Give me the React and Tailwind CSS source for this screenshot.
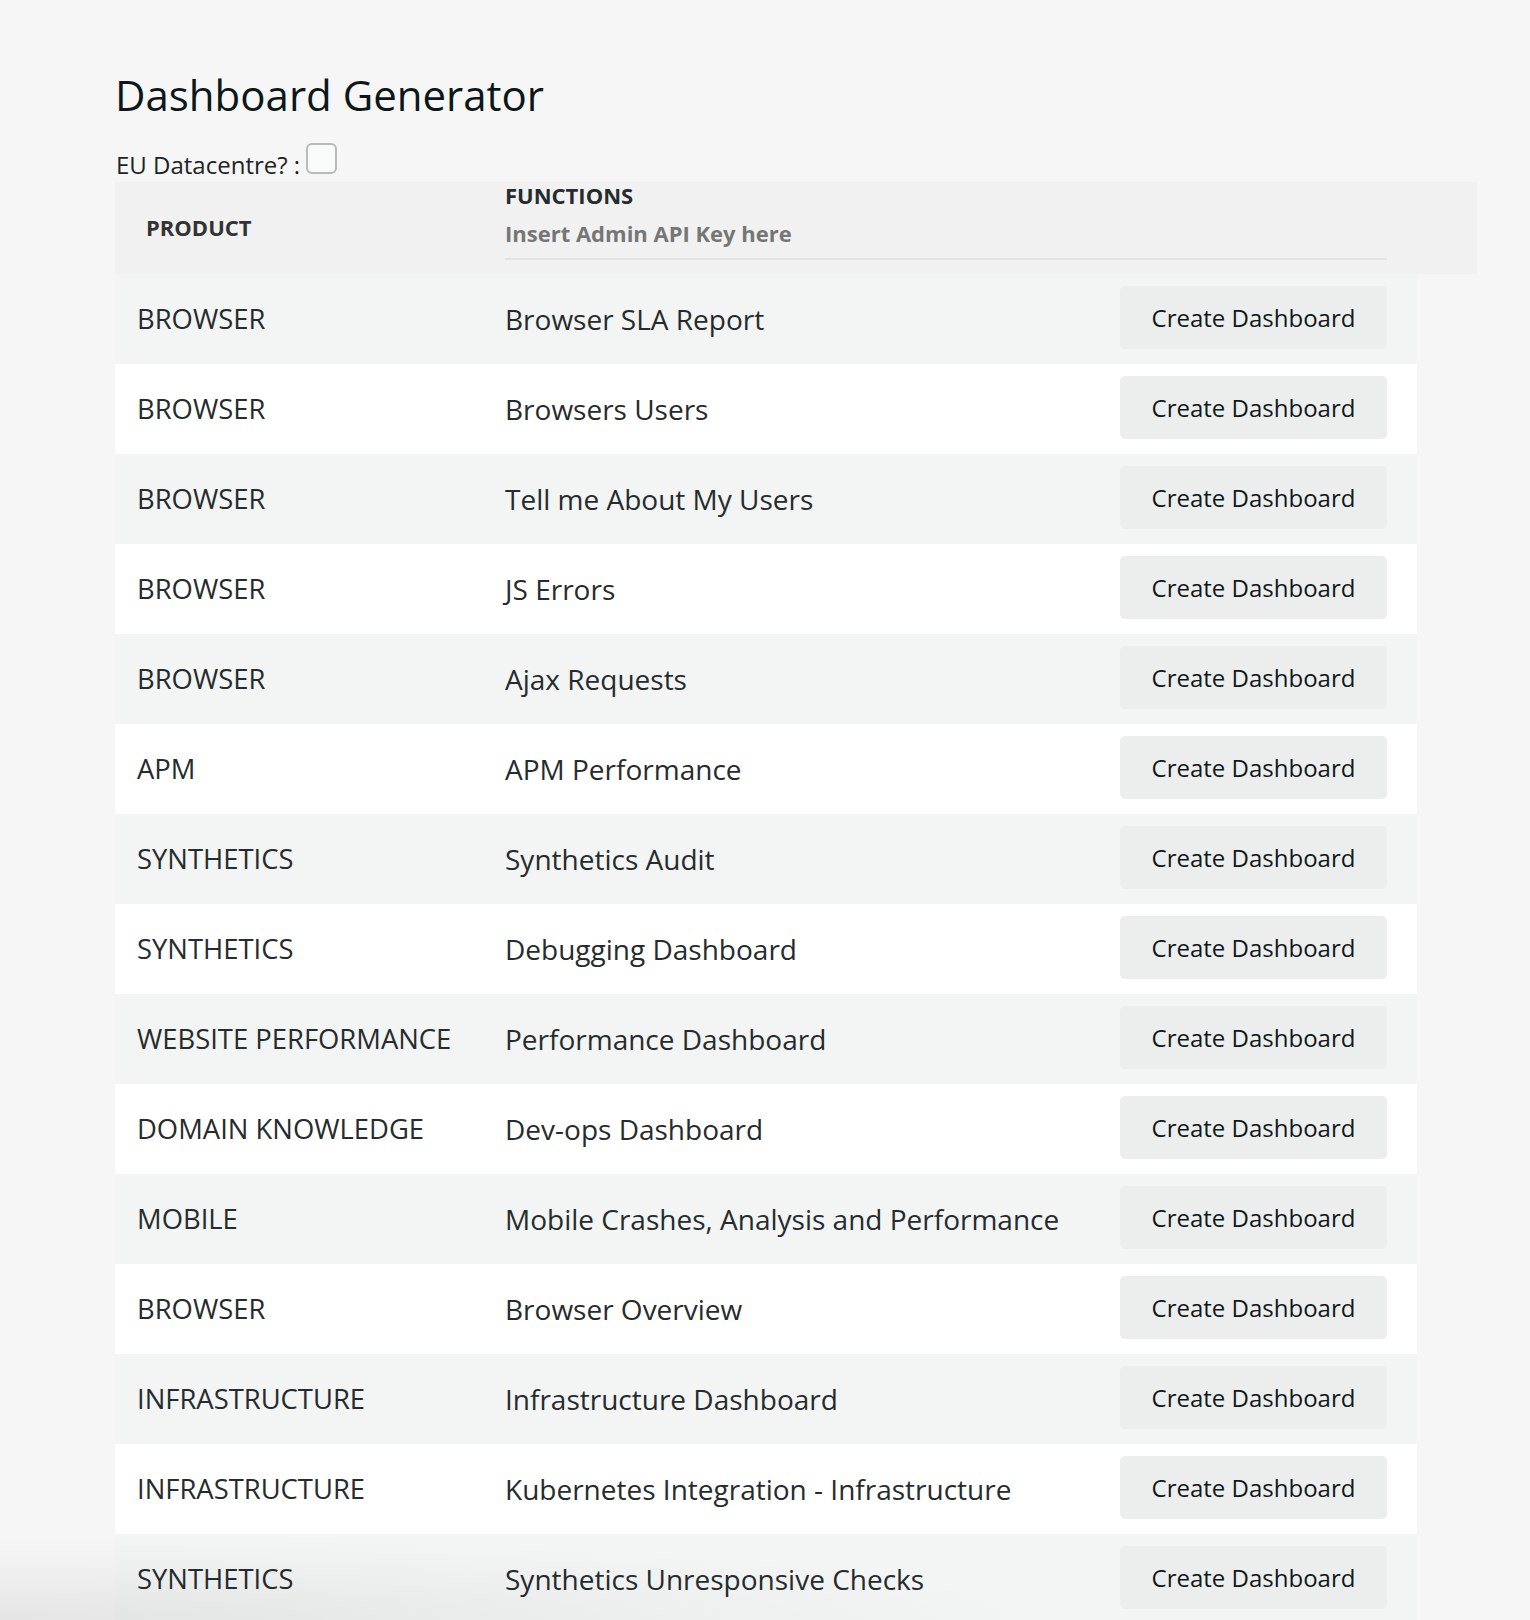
import React from "react";

const rows = [
  ["BROWSER", "Browser SLA Report"],
  ["BROWSER", "Browsers Users"],
  ["BROWSER", "Tell me About My Users"],
  ["BROWSER", "JS Errors"],
  ["BROWSER", "Ajax Requests"],
  ["APM", "APM Performance"],
  ["SYNTHETICS", "Synthetics Audit"],
  ["SYNTHETICS", "Debugging Dashboard"],
  ["WEBSITE PERFORMANCE", "Performance Dashboard"],
  ["DOMAIN KNOWLEDGE", "Dev-ops Dashboard"],
  ["MOBILE", "Mobile Crashes, Analysis and Performance"],
  ["BROWSER", "Browser Overview"],
  ["INFRASTRUCTURE", "Infrastructure Dashboard"],
  ["INFRASTRUCTURE", "Kubernetes Integration - Infrastructure"],
  ["SYNTHETICS", "Synthetics Unresponsive Checks"],
];

export default function App() {
  return (
    <div
      className="relative h-[1620px] overflow-hidden bg-[#f6f6f6] text-[#2a2f31]"
      style={{ fontFamily: '"Open Sans", "Noto Sans", sans-serif' }}
    >
      <div className="pl-[115px] pt-[67px]">
        <h1 className="text-[42px] leading-[56px] font-normal text-[#0d1719]">
          Dashboard Generator
        </h1>
        <div className="mt-[20px] flex items-baseline gap-[6px] pl-[1px]">
          <span className="text-[24px] leading-[32px] text-[#1d2426]">EU Datacentre? :</span>
          <span className="inline-block w-[31px] h-[31px] rounded-[6px] border-2 border-[#b7baba] bg-[#f9fafa]"></span>
        </div>

        {/* header */}
        <div className="mt-[1px] flex h-[92px] w-[1362px] bg-[#f1f1f1]">
          <div className="flex w-[390px] items-center pl-[31px] pb-[2px]">
            <span className="text-[22px] leading-[28px] font-bold text-[#333333]">PRODUCT</span>
          </div>
          <div className="flex w-[882px] flex-col">
            <div className="h-[26px] text-[22px] leading-[26px] font-bold text-[#262b2d]">FUNCTIONS</div>
            <input
              type="text"
              placeholder="Insert Admin API Key here"
              className="mt-[4px] h-[48px] w-full border-b-2 border-[#e2e2e2] bg-transparent p-0 pb-[4px] text-[22px] leading-[28px] font-bold text-[#333] outline-none placeholder:text-[#767676]"
            />
          </div>
        </div>

        {/* rows */}
        <div className="w-[1302px]">
          {rows.map(([product, fn], i) => (
            <div
              key={i}
              className={
                "flex h-[90px] items-center " +
                (i % 2 === 0 ? "bg-[#f3f4f4]" : "bg-white")
              }
            >
              <div className="w-[390px] pl-[22px] text-[27.4px] leading-[38px] text-[#262c2e]">
                {product}
              </div>
              <div className="flex-1 text-[28px] leading-[38px] text-[#262c2e]">{fn}</div>
              <button className="mr-[30px] mt-[12px] flex h-[63px] w-[267px] items-center justify-center self-start rounded-[5px] bg-[#eceeee] text-[24px] leading-[32px] text-[#111819]">
                Create Dashboard
              </button>
            </div>
          ))}
        </div>
      </div>

      <div className="pointer-events-none absolute bottom-0 left-0 h-[80px] w-[1000px] bg-[radial-gradient(ellipse_at_bottom_left,rgba(0,0,0,0.07),rgba(0,0,0,0.02)_50%,transparent_75%)]"></div>
    </div>
  );
}
